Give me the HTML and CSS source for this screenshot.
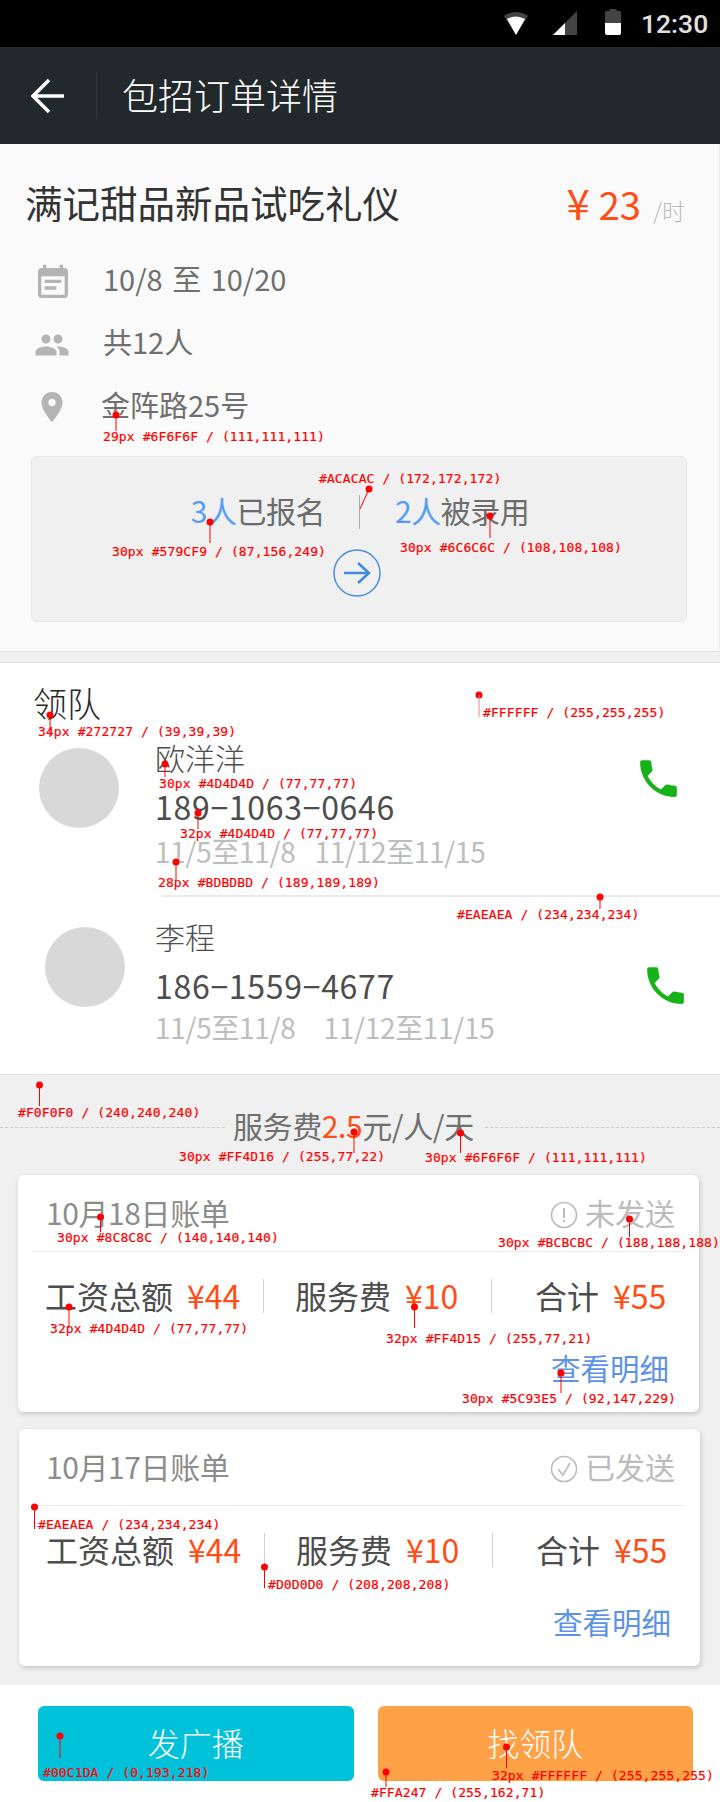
FILE: index.html
```html
<!DOCTYPE html>
<html lang="zh-CN">
<head>
    <meta charset="UTF-8">
    <meta name="viewport" content="width=device-width, initial-scale=1.0">
    <title>包招订单详情</title>
    <link rel="stylesheet" href="styles.css">
</head>
<body>
    <div class="page">
        <div class="statusbar">
            <svg class="st-wifi" width="24" height="24" viewBox="0 0 24 24">
                <path fill="#444" d="M0 5Q12 -3 24 5L12 24Z"/>
                <path fill="#fff" d="M3 8Q12 3 21 8L12 24Z"/>
            </svg>
            <svg class="st-signal" width="24" height="24" viewBox="0 0 24 24">
                <path fill="#444" d="M24 0V24H0Z"/>
                <path fill="#fff" d="M12 12V24H0Z"/>
            </svg>
            <svg class="st-battery" width="16" height="26" viewBox="0 0 16 26">
                <path fill="#444" d="M4 2Q4 0 6 0H10Q12 0 12 2H14Q16 2 16 4V14H0V4Q0 2 2 2Z"/>
                <path fill="#fff" d="M0 14H16V24Q16 26 14 26H2Q0 26 0 24Z"/>
            </svg>
            <span class="st-time">12:30</span>
        </div>

        <div class="topbar">
            <svg class="back" width="34" height="36" viewBox="0 0 34 36">
                <path fill="none" stroke="#fff" stroke-width="3.5" d="M33 18H3M18 2L2 18L18 34"/>
            </svg>
            <div class="topbar-line"></div>
            <h1 class="topbar-title">包招订单详情</h1>
        </div>

        <section class="job">
            <div class="job-head">
                <h2 class="job-title">满记甜品新品试吃礼仪</h2>
                <div class="job-price">
                    <span class="job-yen">¥</span><span class="job-num">23</span><span class="job-unit">/时</span>
                </div>
            </div>
            <div class="info-row">
                <svg class="info-icon icon-cal" width="40" height="40" viewBox="0 0 24 24"><path d="M17 10H7v2h10v-2zm2-7h-1V1h-2v2H8V1H6v2H5c-1.11 0-1.99.9-1.99 2L3 19c0 1.1.89 2 2 2h14c1.1 0 2-.9 2-2V5c0-1.1-.9-2-2-2zm0 16H5V8h14v11zm-5-5H7v2h7v-2z"/></svg>
                <span class="info-text info-date">10/8 至 10/20</span>
            </div>
            <div class="info-row">
                <svg class="info-icon icon-group" width="36" height="36" viewBox="0 0 24 24"><path d="M16 11c1.66 0 2.99-1.34 2.99-3S17.66 5 16 5c-1.66 0-3 1.34-3 3s1.34 3 3 3zm-8 0c1.66 0 2.99-1.34 2.99-3S9.66 5 8 5C6.34 5 5 6.34 5 8s1.34 3 3 3zm0 2c-2.33 0-7 1.17-7 3.5V19h14v-2.5c0-2.33-4.67-3.5-7-3.5zm8 0c-.29 0-.62.02-.97.05 1.16.84 1.97 1.97 1.97 3.45V19h6v-2.5c0-2.33-4.67-3.5-7-3.5z"/></svg>
                <span class="info-text">共12人</span>
            </div>
            <div class="info-row">
                <svg class="info-icon icon-pin" width="36" height="36" viewBox="0 0 24 24"><path d="M12 2C8.13 2 5 5.13 5 9c0 5.25 7 13 7 13s7-7.75 7-13c0-3.87-3.13-7-7-7zm0 9.5c-1.38 0-2.5-1.12-2.5-2.5s1.12-2.5 2.5-2.5 2.5 1.12 2.5 2.5-1.12 2.5-2.5 2.5z"/></svg>
                <span class="info-text info-addr">金阵路25号</span>
            </div>
            <div class="apply-box">
                <div class="apply-counts">
                    <span class="apply-text"><em>3人</em>已报名</span>
                    <i class="apply-line"></i>
                    <span class="apply-text"><em>2人</em>被录用</span>
                </div>
                <svg class="apply-go" width="48" height="48" viewBox="0 0 48 48">
                    <circle cx="24" cy="24" r="23" fill="none" stroke="#4a90dc" stroke-width="1.5"/>
                    <path fill="none" stroke="#3f8ad9" stroke-width="2.5" d="M11 24H35M25 14L36 24L25 34"/>
                </svg>
            </div>
        </section>

        <div class="band"></div>

        <section class="leaders">
            <h3 class="leaders-title">领队</h3>
            <div class="leader leader-first">
                <div class="avatar"></div>
                <div class="leader-info">
                    <div class="leader-name">欧洋洋</div>
                    <div class="leader-phone">189−1063−0646</div>
                    <div class="leader-dates"><span>11/5至11/8</span><span>11/12至11/15</span></div>
                </div>
                <svg class="call" width="49" height="49" viewBox="0 0 24 24"><path d="M6.62 10.79c1.44 2.83 3.76 5.14 6.59 6.59l2.2-2.2c.27-.27.67-.36 1.02-.24 1.12.37 2.33.57 3.57.57.55 0 1 .45 1 1V20c0 .55-.45 1-1 1-9.39 0-17-7.61-17-17 0-.55.45-1 1-1h3.5c.55 0 1 .45 1 1 0 1.25.2 2.45.57 3.57.11.35.03.74-.25 1.02l-2.2 2.2z"/></svg>
            </div>
            <div class="leader-line"></div>
            <div class="leader leader-second">
                <div class="avatar"></div>
                <div class="leader-info">
                    <div class="leader-name">李程</div>
                    <div class="leader-phone">186−1559−4677</div>
                    <div class="leader-dates"><span>11/5至11/8</span><span>11/12至11/15</span></div>
                </div>
                <svg class="call" width="49" height="49" viewBox="0 0 24 24"><path d="M6.62 10.79c1.44 2.83 3.76 5.14 6.59 6.59l2.2-2.2c.27-.27.67-.36 1.02-.24 1.12.37 2.33.57 3.57.57.55 0 1 .45 1 1V20c0 .55-.45 1-1 1-9.39 0-17-7.61-17-17 0-.55.45-1 1-1h3.5c.55 0 1 .45 1 1 0 1.25.2 2.45.57 3.57.11.35.03.74-.25 1.02l-2.2 2.2z"/></svg>
            </div>
        </section>

        <section class="bills">
            <div class="fee">
                <i class="fee-dash fee-dash-left"></i>
                <span class="fee-text">服务费<em>2.5</em>元/人/天</span>
                <i class="fee-dash fee-dash-right"></i>
            </div>

            <div class="bill">
                <div class="bill-head">
                    <span class="bill-date">10月18日账单</span>
                    <span class="bill-status">
                        <svg width="28" height="28" viewBox="0 0 28 28">
                            <circle cx="14" cy="14" r="12.5" fill="none" stroke="#bcbcbc" stroke-width="1.6"/>
                            <path fill="none" stroke="#bcbcbc" stroke-width="2" d="M14 7V17M14 19V21"/>
                        </svg>
                        未发送
                    </span>
                </div>
                <div class="bill-row">
                    <div class="bill-cell bill-cell-a">工资总额<b>¥44</b></div>
                    <div class="bill-cell bill-cell-b">服务费<b>¥10</b></div>
                    <div class="bill-cell bill-cell-c">合计<b>¥55</b></div>
                </div>
                <div class="bill-link">查看明细</div>
            </div>

            <div class="bill bill-second">
                <div class="bill-head">
                    <span class="bill-date">10月17日账单</span>
                    <span class="bill-status">
                        <svg width="28" height="28" viewBox="0 0 28 28">
                            <circle cx="14" cy="14" r="12.5" fill="none" stroke="#bcbcbc" stroke-width="1.6"/>
                            <path fill="none" stroke="#bcbcbc" stroke-width="1.6" d="M8 14L13 20L20 8"/>
                        </svg>
                        已发送
                    </span>
                </div>
                <div class="bill-row">
                    <div class="bill-cell bill-cell-a">工资总额<b>¥44</b></div>
                    <div class="bill-cell bill-cell-b">服务费<b>¥10</b></div>
                    <div class="bill-cell bill-cell-c">合计<b>¥55</b></div>
                </div>
                <div class="bill-link">查看明细</div>
            </div>
        </section>

        <div class="actions">
            <button type="button" class="action action-cast">发广播</button>
            <button type="button" class="action action-find">找领队</button>
        </div>

        <!-- red measuring marks that sit on top of the design -->
        <svg class="marks" width="720" height="1802" viewBox="0 0 720 1802">
            <g class="pins">
                <circle cx="116" cy="415" r="3.5"/><path d="M116 415V431"/>
                <circle cx="369" cy="489" r="3.5"/><path d="M369 489L360 509"/>
                <circle cx="210" cy="522" r="3.5"/><path d="M210 522V543"/>
                <circle cx="490" cy="516" r="3.5"/><path d="M490 516V538"/>
                <circle cx="479" cy="695" r="3.5"/><path class="pin-soft" d="M479 695V717"/>
                <circle cx="50" cy="715" r="3.5"/><path d="M50 715V737"/>
                <circle cx="165" cy="764" r="3.5"/><path d="M165 764V777"/>
                <circle cx="198" cy="813" r="3.5"/><path d="M198 813V829"/>
                <circle cx="176" cy="862" r="3.5"/><path d="M176 862V880"/>
                <circle cx="600" cy="897" r="3.5"/><path d="M600 897V909"/>
                <circle cx="39.500" cy="1085" r="3.5"/><path d="M39.500 1085V1106"/>
                <circle cx="354" cy="1132" r="3.5"/><path d="M354 1132V1153"/>
                <circle cx="460.500" cy="1133" r="3.5"/><path d="M460.500 1133V1153"/>
                <circle cx="100.500" cy="1217" r="3.5"/><path d="M100.500 1217V1232"/>
                <circle cx="629.500" cy="1219" r="3.5"/><path d="M629.500 1219V1237"/>
                <circle cx="69" cy="1307" r="3.5"/><path d="M69 1307V1328"/>
                <circle cx="414.500" cy="1307" r="3.5"/><path d="M414.500 1307V1328"/>
                <circle cx="561" cy="1373" r="3.5"/><path d="M561 1373V1393"/>
                <circle cx="34.500" cy="1507" r="3.5"/><path d="M34.500 1507V1529"/>
                <circle cx="264.500" cy="1567" r="3.5"/><path d="M264.500 1567V1588"/>
                <circle cx="60" cy="1736" r="3.5"/><path d="M60 1736V1758"/>
                <circle cx="386" cy="1772" r="3.5"/><path d="M386 1772V1787"/>
                <circle cx="506.500" cy="1747" r="3.5"/><path d="M506.500 1747V1768"/>
            </g>
            <g class="tags">
                <text x="103" y="441">29px #6F6F6F / (111,111,111)</text>
                <text x="319" y="483">#ACACAC / (172,172,172)</text>
                <text x="112" y="556">30px #579CF9 / (87,156,249)</text>
                <text x="400" y="552">30px #6C6C6C / (108,108,108)</text>
                <text x="483" y="717">#FFFFFF / (255,255,255)</text>
                <text x="38" y="736">34px #272727 / (39,39,39)</text>
                <text x="159" y="788">30px #4D4D4D / (77,77,77)</text>
                <text x="180" y="838">32px #4D4D4D / (77,77,77)</text>
                <text x="158" y="887">28px #BDBDBD / (189,189,189)</text>
                <text x="457" y="919">#EAEAEA / (234,234,234)</text>
                <text x="18" y="1117">#F0F0F0 / (240,240,240)</text>
                <text x="179" y="1161">30px #FF4D16 / (255,77,22)</text>
                <text x="425" y="1162">30px #6F6F6F / (111,111,111)</text>
                <text x="57" y="1242">30px #8C8C8C / (140,140,140)</text>
                <text x="498" y="1247">30px #BCBCBC / (188,188,188)</text>
                <text x="50" y="1333">32px #4D4D4D / (77,77,77)</text>
                <text x="386" y="1343">32px #FF4D15 / (255,77,21)</text>
                <text x="462" y="1403">30px #5C93E5 / (92,147,229)</text>
                <text x="38" y="1529">#EAEAEA / (234,234,234)</text>
                <text x="268" y="1589">#D0D0D0 / (208,208,208)</text>
                <text x="43" y="1777">#00C1DA / (0,193,218)</text>
                <text x="371" y="1797">#FFA247 / (255,162,71)</text>
                <text x="492" y="1780">32px #FFFFFF / (255,255,255)</text>
            </g>
        </svg>
    </div>
</body>
</html>
```

FILE: styles.css
```css
* {
    box-sizing: border-box;
}
body {
    margin: 0;
    background-color: #f0f0f0;
    font-family: "Noto Sans CJK SC", "Noto Sans", sans-serif;
}
em {
    font-style: normal;
}
h1, h2, h3 {
    margin: 0;
    font-weight: normal;
}
.page {
    position: relative;
    width: 720px;
    height: 1802px;
    overflow: hidden;
}

.statusbar {
    display: flex;
    align-items: center;
    height: 47px;
    padding-left: 504px;
    background-color: #000;
}
.st-signal {
    margin-left: 25px;
}
.st-battery {
    margin-left: 28px;
    margin-top: -3px;
}
.st-wifi,
.st-signal {
    margin-top: -2px;
}
.st-time {
    margin-left: 20px;
    margin-top: -1px;
    font-family: Roboto, sans-serif;
    font-weight: 500;
    font-size: 26.5px;
    color: #e0e0e0;
}

.topbar {
    display: flex;
    align-items: center;
    height: 97px;
    padding-left: 31px;
    background-color: #22292c;
}
.topbar-line {
    width: 1px;
    height: 47px;
    margin-left: 31px;
    background-color: #30383b;
}
.topbar-title {
    margin: 0 0 4px 25px;
    font-size: 36px;
    font-weight: 300;
    color: #fff;
}

.job {
    height: 507px;
    padding-top: 36px;
    background-color: #fafafa;
    border-right: 1px solid #ececec;
}
.job-head {
    display: flex;
    justify-content: space-between;
    height: 44px;
    margin-bottom: 25px;
    padding: 0 34px 0 25px;
}
.job-title {
    font-size: 37.5px;
    line-height: 44px;
    color: #333;
}
.job-price {
    display: flex;
    align-items: baseline;
    line-height: 44px;
}
.job-yen {
    font-size: 42px;
    color: #ff4d16;
}
.job-num {
    margin-left: 9px;
    font-size: 38px;
    color: #ff4d16;
}
.job-unit {
    margin-left: 12px;
    font-size: 23px;
    font-weight: 300;
    color: #bbb;
}
.info-row {
    display: flex;
    align-items: center;
    height: 63px;
    padding-left: 33px;
}
.info-icon {
    flex: none;
    fill: #b4b4b4;
}
.icon-cal {
    margin: 5px 30px 0 0;
}
.icon-group {
    margin: 3px 33px 0 1px;
}
.icon-pin {
    margin: 0 33px 0 1px;
}
.info-text {
    margin-bottom: 5px;
    font-size: 29px;
    color: #6f6f6f;
}
.info-date {
    word-spacing: 3px;
}
.info-addr {
    margin-left: -2px;
}
.apply-box {
    display: flex;
    flex-direction: column;
    align-items: center;
    width: 656px;
    height: 166px;
    margin: 18px 0 0 31px;
    padding-top: 35px;
    background-color: #f0f0f0;
    border: 1px solid #e6e6e6;
    border-radius: 6px;
}
.apply-counts {
    display: flex;
    align-items: center;
    height: 40px;
    margin-left: 2px;
}
.apply-text {
    margin-bottom: 5px;
    font-size: 30px;
    line-height: 40px;
    letter-spacing: -0.5px;
    color: #6c6c6c;
}
.apply-text em {
    color: #579cf9;
}
.apply-line {
    width: 1px;
    height: 34px;
    margin: 0 35px 0 34px;
    background-color: #acacac;
}
.apply-go {
    margin: 17px 4px 0 0;
}

.band {
    height: 12px;
    background-color: #f0f0f0;
    border-top: 1px solid #e4e4e4;
    border-bottom: 1px solid #e4e4e4;
}

.leaders {
    height: 412px;
    padding-top: 20px;
    background-color: #fff;
    border-bottom: 1px solid #e4e4e4;
}
.leaders-title {
    height: 53px;
    padding-left: 33px;
    font-size: 34px;
    font-weight: 300;
    line-height: 40px;
    color: #272727;
}
.leader {
    display: flex;
    align-items: flex-start;
}
.leader-first {
    padding-left: 39px;
}
.leader-second {
    padding-left: 45px;
}
.avatar {
    flex: none;
    width: 80px;
    height: 80px;
    margin-top: 12px;
    border-radius: 50%;
    background-color: #d8d8d8;
}
.leader-info {
    flex: none;
    width: 479px;
    margin: -3px 0 0 36px;
}
.leader-second .leader-info {
    width: 486px;
    margin-left: 30px;
}
.leader-name {
    font-size: 30px;
    font-weight: 300;
    line-height: 48px;
    color: #4d4d4d;
}
.leader-phone {
    margin-top: 1px;
    font-size: 32px;
    line-height: 48px;
    letter-spacing: 0.7px;
    color: #4d4d4d;
}
.leader-dates {
    font-size: 28px;
    line-height: 42px;
    letter-spacing: -0.3px;
    color: #bdbdbd;
}
.leader-second .leader-dates {
    margin-top: -3px;
}
.leader-dates span + span {
    margin-left: 19px;
}
.leader-second .leader-dates span + span {
    margin-left: 28px;
}
.call {
    flex: none;
    margin-top: 18px;
    fill: #17b217;
}
.leader-second .call {
    margin-top: 46px;
}
.leader-line {
    height: 2px;
    margin: 23px 0 18px 161px;
    background-color: #eaeaea;
}

.bills {
    height: 610px;
    padding-top: 32px;
}
.fee {
    display: flex;
    align-items: center;
    height: 40px;
    margin-bottom: 28px;
}
.fee-dash {
    height: 0;
    border-top: 1px dashed #ccc;
}
.fee-dash-left {
    width: 225px;
    margin-right: 8px;
}
.fee-dash-right {
    flex: 1;
    margin-left: 11px;
}
.fee-text {
    margin-bottom: 5px;
    font-size: 30px;
    letter-spacing: -0.4px;
    color: #6f6f6f;
}
.fee-text em {
    color: #ff4d16;
}
.bill {
    width: 681px;
    height: 237px;
    margin-left: 18px;
    padding-top: 20px;
    background-color: #fff;
    border-radius: 6px;
    box-shadow: 1px 2px 5px rgba(0, 0, 0, 0.18);
}
.bill-second {
    margin-top: 17px;
    margin-left: 19px;
}
.bill-head {
    display: flex;
    justify-content: space-between;
    align-items: center;
    height: 57px;
    margin: 0 16px 0 15px;
    padding: 0 8px 22px 13px;
    border-bottom: 1px solid #eaeaea;
}
.bill-second .bill-head {
    padding-left: 12px;
    padding-right: 9px;
}
.bill-date {
    font-size: 30px;
    line-height: 40px;
    letter-spacing: -0.4px;
    color: #8c8c8c;
}
.bill-status {
    display: flex;
    align-items: center;
    font-size: 30px;
    line-height: 40px;
    color: #bcbcbc;
}
.bill-status svg {
    margin: 5px 7px 0 0;
}
.bill-row {
    display: flex;
    height: 34px;
    margin-top: 27px;
    padding-left: 27px;
}
.bill-cell {
    font-size: 32px;
    line-height: 32px;
    color: #4d4d4d;
    white-space: nowrap;
}
.bill-cell b {
    margin-left: 14px;
    font-weight: normal;
    color: #ff4d15;
}
.bill-cell-a {
    width: 219px;
    border-right: 1px solid #d0d0d0;
}
.bill-cell-b {
    width: 228px;
    padding-left: 31px;
    border-right: 1px solid #d0d0d0;
}
.bill-cell-c {
    padding-left: 43px;
}
.bill-link {
    margin-top: 34px;
    padding-right: 30px;
    text-align: right;
    font-size: 29.5px;
    line-height: 40px;
    color: #5c93e5;
}
.bill-second .bill-link {
    padding-right: 29px;
}

.actions {
    display: flex;
    gap: 24px;
    height: 117px;
    padding: 21px 27px 0 38px;
    background-color: #fff;
}
.action {
    flex: 1;
    height: 75px;
    padding: 0 0 4px;
    border: none;
    border-radius: 6px;
    font-family: inherit;
    font-weight: 300;
    font-size: 32px;
    color: #fff;
}
.action-cast {
    background-color: #00c1da;
}
.action-find {
    background-color: #ffa247;
}

.marks {
    position: absolute;
    left: 0;
    top: 0;
}
.pins circle {
    fill: #f00;
}
.pins path {
    fill: none;
    stroke: #f00;
    stroke-width: 1;
}
.pins .pin-soft {
    stroke: #ff8080;
}
.tags text {
    font-family: "DejaVu Sans Mono", monospace;
    font-size: 13px;
    letter-spacing: 0.1px;
    fill: #f00;
    stroke: #f00;
    stroke-width: 0.2;
}
```
